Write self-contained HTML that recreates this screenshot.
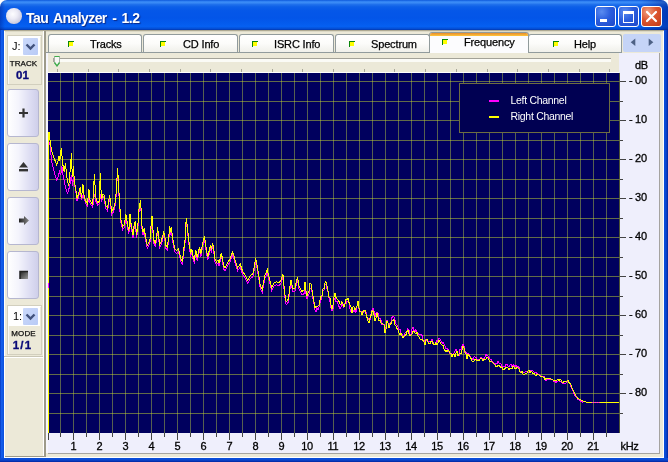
<!DOCTYPE html>
<html><head><meta charset="utf-8"><title>Tau Analyzer - 1.2</title>
<style>
html,body{margin:0;padding:0;}
body{width:668px;height:462px;overflow:hidden;background:#0054e3;font-family:"Liberation Sans",sans-serif;position:relative;}
#win{position:absolute;left:0;top:0;width:668px;height:462px;background:#0a50dc;overflow:hidden;}
#tbar{position:absolute;left:0;top:0;width:668px;height:30px;border-radius:7px 7px 0 0;
 background:linear-gradient(to bottom,#0a55d8 0,#2f80f2 4%,#3b8cf6 9%,#1f70ec 15%,#0c5fe8 23%,#0557e8 36%,#0355e8 60%,#045cee 80%,#0560f2 88%,#0450d8 95%,#0338b0 100%);}
#tshade{position:absolute;left:0;top:0;width:668px;height:30px;border-radius:7px 7px 0 0;
 background:linear-gradient(to right,rgba(0,20,120,.35) 0,rgba(0,0,0,0) 5px,rgba(0,0,0,0) 640px,rgba(0,20,120,.45) 668px);}
#corner-l,#corner-r{position:absolute;top:0;width:8px;height:8px;background:#fff;z-index:0}
#title{position:absolute;left:26px;top:9px;color:#fff;font-weight:bold;font-size:14px;letter-spacing:-0.58px;word-spacing:2.1px;text-shadow:1px 1px 1px #0a2a8a;white-space:nowrap;line-height:18px}
#ball{position:absolute;left:6px;top:8px;width:15.5px;height:15.5px;border-radius:50%;
 background:radial-gradient(circle at 42% 38%,#fdfdff 0%,#ecebf5 35%,#d2d1e2 65%,#b4b3cc 90%,#9c9bb8 100%);}
.cb{position:absolute;top:6px;width:19px;height:19px;border:1px solid #fff;border-radius:3px;}
.cbb{background:radial-gradient(circle at 30% 25%,#5a8cf0 0%,#2b5ede 45%,#1d47c8 100%);}
.cbr{background:radial-gradient(circle at 30% 25%,#f0a080 0%,#dc5530 45%,#c23a18 100%);}
#client{position:absolute;left:4px;top:30px;width:660px;height:428px;background:#ece9d8;}
#lborder{position:absolute;left:0;top:30px;width:4px;height:432px;background:linear-gradient(to right,#0638c0,#1560ee 40%,#0a50dc);}
#rborder{position:absolute;left:664px;top:30px;width:4px;height:432px;background:linear-gradient(to right,#0a50dc,#0c48d0 50%,#0226a0);}
#bborder{position:absolute;left:0;top:458px;width:668px;height:4px;background:linear-gradient(to bottom,#0a50dc,#0c48d0 50%,#0226a0);}
.abs{position:absolute}
.ttext,.ctext,.slabel,.sval,#title{will-change:transform}
svg.main{will-change:transform}
.tab{position:absolute;top:34px;height:18px;box-sizing:border-box;border:1px solid #919b9c;border-bottom:none;border-radius:3px 3px 0 0;background:linear-gradient(to bottom,#ffffff 0%,#fcfcfa 50%,#f0f0ea 100%);}
.ticon{position:absolute;width:5px;height:5px;background:linear-gradient(#ffff00,#ffff00) 0 0/4px 4px no-repeat;border-left:1px solid #0a860a;border-top:1px solid #0a860a;}
.ttext{position:absolute;font-size:11px;letter-spacing:-0.15px;line-height:14px;color:#000;-webkit-text-stroke:0.25px #000;white-space:nowrap}
#seltab{position:absolute;left:429px;top:32px;width:100px;height:22px;box-sizing:border-box;border:1px solid #919b9c;border-bottom:none;border-radius:3px 3px 0 0;background:#fcfcfe;overflow:hidden}
#seltab:before{content:"";position:absolute;left:0;top:0;width:100%;height:3px;background:linear-gradient(to bottom,#e68b2c,#ffc73c);}
#nav{position:absolute;left:623px;top:34px;width:38px;height:18px;background:#c5d4f7;border-radius:2px}
.sbtn{position:absolute;left:7px;width:32px;height:48px;box-sizing:border-box;border:1px solid #b6b7d0;border-radius:3px;background:linear-gradient(to right,#ffffff 0%,#f4f4fc 35%,#dcdcf2 75%,#cfcfea 100%);}
.spanel{position:absolute;left:7px;width:35px;height:50px;box-sizing:border-box;border:1px solid #d2cfbe;box-shadow:inset 1px 1px 0 #fbfaf5;background:#ece9d8;}
.combo{position:absolute;left:0px;top:0px;width:32px;height:20px;background:#fff;}
.ddb{position:absolute;left:15px;top:2px;width:15px;height:17px;background:linear-gradient(135deg,#cbd9fb,#b9cbf6);border-radius:1px}
.ctext{position:absolute;left:3.5px;top:4px;font-size:11px;line-height:13px;color:#000}
.slabel{position:absolute;left:0;width:33px;text-align:center;font-size:7px;line-height:7px;font-weight:normal;-webkit-text-stroke:0.25px #111;color:#111;letter-spacing:0.1px;transform:scaleX(1.14);transform-origin:50% 50%;white-space:nowrap}
.sval{position:absolute;left:0;width:33px;-webkit-text-stroke:0.35px #0a0a78;text-align:center;font-size:11.5px;line-height:12px;font-weight:bold;color:#0a0a78;white-space:nowrap}
svg text{font-family:"Liberation Sans",sans-serif;font-size:11px;fill:#000;stroke:#000;stroke-width:0.3px;letter-spacing:-0.3px}
</style></head><body>
<div id="win">
<div id="corner-l" style="left:0"></div><div id="corner-r" style="left:660px"></div>
<div id="tbar"></div><div id="tshade"></div>
<div id="ball"></div>
<div id="title">Tau Analyzer - 1.2</div>
<div class="cb cbb" style="left:595px"><div class="abs" style="left:4px;top:12px;width:7px;height:3px;background:#fff"></div></div>
<div class="cb cbb" style="left:618px"><div class="abs" style="left:4px;top:4px;width:9px;height:8px;border:1px solid #fff;border-top-width:3px;box-sizing:content-box"></div></div>
<div class="cb cbr" style="left:641px"><svg width="19" height="19" style="position:absolute;left:0;top:0"><path d="M5 5L14 14M14 5L5 14" stroke="#fff" stroke-width="2.2" stroke-linecap="round"/></svg></div>
<div id="lborder"></div><div id="rborder"></div><div id="bborder"></div>
<div id="client"></div>
<div class="abs" style="left:4px;top:30px;width:660px;height:1px;background:#aea993"></div>
<div class="abs" style="left:4px;top:31px;width:660px;height:1px;background:#dcd9c6"></div>

<!-- sidebar -->
<div class="abs" style="left:4px;top:31px;width:1px;height:427px;background:#fff"></div>
<div class="abs" style="left:43px;top:31px;width:1px;height:427px;background:#fff"></div>
<div class="abs" style="left:44px;top:31px;width:2px;height:426px;background:#9d9a8a"></div>
<div class="abs" style="left:5px;top:456px;width:41px;height:1px;background:#9d9a8a"></div>
<div class="abs" style="left:46px;top:53px;width:2px;height:400px;background:#f6f6fd"></div>
<div class="spanel" style="top:35px"><div class="combo"><div class="ctext">J:</div><div class="ddb"><svg width="15" height="17"><path d="M3.5 6.5L7.5 10.5L11.5 6.5" stroke="#41527e" stroke-width="2.4" fill="none"/></svg></div></div>
<div class="slabel" style="top:24px;left:-1px">TRACK</div><div class="sval" style="top:33px;left:-2px">01</div></div>
<div class="sbtn" style="top:89px"><svg width="30" height="46"><path d="M15.5 18.5v9M11 23h9" stroke="#333" stroke-width="2.2"/></svg></div>
<div class="sbtn" style="top:143px"><svg width="30" height="46"><path d="M15.5 18L20 23.5H11Z" fill="#333"/><rect x="11" y="25" width="9" height="2.4" fill="#333"/></svg></div>
<div class="sbtn" style="top:197px"><svg width="30" height="46"><defs><linearGradient id="ag" x1="0" x2="1"><stop offset="0" stop-color="#222"/><stop offset="1" stop-color="#888"/></linearGradient></defs><path d="M11 20.5h5v-2.5l5 4.5l-5 4.5v-2.5h-5z" fill="url(#ag)"/></svg></div>
<div class="sbtn" style="top:251px"><svg width="30" height="46"><defs><linearGradient id="sg" x1="0" y1="0" x2="1" y2="1"><stop offset="0" stop-color="#222"/><stop offset="1" stop-color="#999"/></linearGradient></defs><rect x="12" y="19.5" width="8" height="7.5" fill="url(#sg)"/><path d="M12 27V19.5H20" stroke="#222" stroke-width="1.5" fill="none"/></svg></div>
<div class="spanel" style="top:305px"><div class="combo"><div class="ctext" style="left:5px">1:</div><div class="ddb"><svg width="15" height="17"><path d="M3.5 6.5L7.5 10.5L11.5 6.5" stroke="#41527e" stroke-width="2.4" fill="none"/></svg></div></div>
<div class="slabel" style="top:24px;left:-1px">MODE</div><div class="sval" style="top:33px;left:-2.5px;letter-spacing:1.2px">1/1</div></div>
<div class="abs" style="left:4px;top:356px;width:39px;height:1px;background:#c9c6b5"></div>
<div class="abs" style="left:4px;top:357px;width:39px;height:1px;background:#fff"></div>

<!-- tabs -->
<div class="abs" style="left:46px;top:52px;width:576px;height:1px;background:#919b9c"></div>
<div class="tab" style="left:48px;width:94px"></div>
<div class="ticon" style="left:68px;top:41px"></div>
<div class="ttext" style="left:90px;top:37px">Tracks</div>
<div class="tab" style="left:143px;width:95px"></div>
<div class="ticon" style="left:160px;top:41px"></div>
<div class="ttext" style="left:183px;top:37px">CD Info</div>
<div class="tab" style="left:239px;width:95px"></div>
<div class="ticon" style="left:252px;top:41px"></div>
<div class="ttext" style="left:273.7px;top:37px">ISRC Info</div>
<div class="tab" style="left:335px;width:95px"></div>
<div class="ticon" style="left:349px;top:41px"></div>
<div class="ttext" style="left:370.7px;top:37px">Spectrum</div>
<div class="tab" style="left:528px;width:94px"></div>
<div class="ticon" style="left:553px;top:41px"></div>
<div class="ttext" style="left:574px;top:37px">Help</div>
<div id="seltab"></div>
<div class="ticon" style="left:442px;top:39px"></div>
<div class="ttext" style="left:463.5px;top:35px">Frequency</div>
<div id="nav"><svg width="38" height="18"><path d="M12.3 4.6V12L7.7 8.3Z" fill="#4d6185"/><path d="M25.7 4.6V12L30.3 8.3Z" fill="#4d6185"/></svg></div>

<!-- chart area -->
<div class="abs" style="left:48px;top:53px;width:612px;height:401px;background:#efeffc"></div>
<div class="abs" style="left:659px;top:53px;width:1px;height:401px;background:#a5a3a0"></div>
<div class="abs" style="left:48px;top:453px;width:612px;height:1px;background:#a5a3a0"></div>
<div class="abs" style="left:4px;top:457px;width:660px;height:1px;background:#fff"></div>
<div class="abs" style="left:663px;top:31px;width:1px;height:427px;background:#fff"></div>
<!-- slider -->
<div class="abs" style="left:48px;top:53px;width:571px;height:19px;background:#ece9d8"></div>
<div class="abs" style="left:48px;top:72px;width:571px;height:1px;background:#fff"></div>
<div class="abs" style="left:53px;top:58px;width:558px;height:4px;box-sizing:border-box;border-top:1px solid #a3a298;border-left:1px solid #a3a298;background:#fbfbf6;"></div>
<svg class="abs main" style="left:0;top:0" width="668" height="462">
<rect x="57" y="69" width="1" height="3" fill="#a9a798"/>
<rect x="88" y="69" width="1" height="3" fill="#a9a798"/>
<rect x="118" y="69" width="1" height="3" fill="#a9a798"/>
<rect x="149" y="69" width="1" height="3" fill="#a9a798"/>
<rect x="180" y="69" width="1" height="3" fill="#a9a798"/>
<rect x="210" y="69" width="1" height="3" fill="#a9a798"/>
<rect x="241" y="69" width="1" height="3" fill="#a9a798"/>
<rect x="272" y="69" width="1" height="3" fill="#a9a798"/>
<rect x="302" y="69" width="1" height="3" fill="#a9a798"/>
<rect x="333" y="69" width="1" height="3" fill="#a9a798"/>
<rect x="364" y="69" width="1" height="3" fill="#a9a798"/>
<rect x="394" y="69" width="1" height="3" fill="#a9a798"/>
<rect x="425" y="69" width="1" height="3" fill="#a9a798"/>
<rect x="456" y="69" width="1" height="3" fill="#a9a798"/>
<rect x="487" y="69" width="1" height="3" fill="#a9a798"/>
<rect x="517" y="69" width="1" height="3" fill="#a9a798"/>
<rect x="548" y="69" width="1" height="3" fill="#a9a798"/>
<rect x="579" y="69" width="1" height="3" fill="#a9a798"/>
<rect x="609" y="69" width="1" height="3" fill="#a9a798"/>
<path d="M54.5 56.5h5v6.5l-2.5 3.2l-2.5 -3.2z" fill="#f7f7f4" stroke="#a9b3a9" stroke-width="1"/>
<path d="M54.5 56.5h5" fill="none" stroke="#3fae4a" stroke-width="1"/>
<path d="M54.5 62.5l2.5 3.4l2.5 -3.4" fill="none" stroke="#3fae4a" stroke-width="1.3"/>
<rect x="48" y="73" width="572" height="360" fill="#00005e"/>
<rect x="60" y="73" width="1" height="360" fill="#566050"/>
<rect x="73" y="73" width="1" height="360" fill="#566050"/>
<rect x="86" y="73" width="1" height="360" fill="#566050"/>
<rect x="99" y="73" width="1" height="360" fill="#566050"/>
<rect x="112" y="73" width="1" height="360" fill="#566050"/>
<rect x="125" y="73" width="1" height="360" fill="#566050"/>
<rect x="138" y="73" width="1" height="360" fill="#566050"/>
<rect x="151" y="73" width="1" height="360" fill="#566050"/>
<rect x="164" y="73" width="1" height="360" fill="#566050"/>
<rect x="177" y="73" width="1" height="360" fill="#566050"/>
<rect x="190" y="73" width="1" height="360" fill="#566050"/>
<rect x="203" y="73" width="1" height="360" fill="#566050"/>
<rect x="216" y="73" width="1" height="360" fill="#566050"/>
<rect x="229" y="73" width="1" height="360" fill="#566050"/>
<rect x="242" y="73" width="1" height="360" fill="#566050"/>
<rect x="255" y="73" width="1" height="360" fill="#566050"/>
<rect x="268" y="73" width="1" height="360" fill="#566050"/>
<rect x="281" y="73" width="1" height="360" fill="#566050"/>
<rect x="294" y="73" width="1" height="360" fill="#566050"/>
<rect x="307" y="73" width="1" height="360" fill="#566050"/>
<rect x="320" y="73" width="1" height="360" fill="#566050"/>
<rect x="333" y="73" width="1" height="360" fill="#566050"/>
<rect x="346" y="73" width="1" height="360" fill="#566050"/>
<rect x="359" y="73" width="1" height="360" fill="#566050"/>
<rect x="372" y="73" width="1" height="360" fill="#566050"/>
<rect x="385" y="73" width="1" height="360" fill="#566050"/>
<rect x="398" y="73" width="1" height="360" fill="#566050"/>
<rect x="411" y="73" width="1" height="360" fill="#566050"/>
<rect x="424" y="73" width="1" height="360" fill="#566050"/>
<rect x="437" y="73" width="1" height="360" fill="#566050"/>
<rect x="450" y="73" width="1" height="360" fill="#566050"/>
<rect x="463" y="73" width="1" height="360" fill="#566050"/>
<rect x="476" y="73" width="1" height="360" fill="#566050"/>
<rect x="489" y="73" width="1" height="360" fill="#566050"/>
<rect x="502" y="73" width="1" height="360" fill="#566050"/>
<rect x="515" y="73" width="1" height="360" fill="#566050"/>
<rect x="528" y="73" width="1" height="360" fill="#566050"/>
<rect x="541" y="73" width="1" height="360" fill="#566050"/>
<rect x="554" y="73" width="1" height="360" fill="#566050"/>
<rect x="567" y="73" width="1" height="360" fill="#566050"/>
<rect x="580" y="73" width="1" height="360" fill="#566050"/>
<rect x="593" y="73" width="1" height="360" fill="#566050"/>
<rect x="606" y="73" width="1" height="360" fill="#566050"/>
<rect x="619" y="73" width="1" height="360" fill="#4c5236"/>
<rect x="48" y="81" width="572" height="1" fill="#626c48"/>
<rect x="48" y="101" width="572" height="1" fill="#626c48"/>
<rect x="48" y="120" width="572" height="1" fill="#626c48"/>
<rect x="48" y="140" width="572" height="1" fill="#626c48"/>
<rect x="48" y="159" width="572" height="1" fill="#626c48"/>
<rect x="48" y="179" width="572" height="1" fill="#626c48"/>
<rect x="48" y="198" width="572" height="1" fill="#626c48"/>
<rect x="48" y="218" width="572" height="1" fill="#626c48"/>
<rect x="48" y="237" width="572" height="1" fill="#626c48"/>
<rect x="48" y="257" width="572" height="1" fill="#626c48"/>
<rect x="48" y="276" width="572" height="1" fill="#626c48"/>
<rect x="48" y="296" width="572" height="1" fill="#626c48"/>
<rect x="48" y="315" width="572" height="1" fill="#626c48"/>
<rect x="48" y="335" width="572" height="1" fill="#626c48"/>
<rect x="48" y="354" width="572" height="1" fill="#626c48"/>
<rect x="48" y="374" width="572" height="1" fill="#626c48"/>
<rect x="48" y="393" width="572" height="1" fill="#626c48"/>
<rect x="48" y="413" width="572" height="1" fill="#626c48"/>
<rect x="60" y="81" width="1" height="1" fill="#90a034"/>
<rect x="60" y="101" width="1" height="1" fill="#90a034"/>
<rect x="60" y="120" width="1" height="1" fill="#90a034"/>
<rect x="60" y="140" width="1" height="1" fill="#90a034"/>
<rect x="60" y="159" width="1" height="1" fill="#90a034"/>
<rect x="60" y="179" width="1" height="1" fill="#90a034"/>
<rect x="60" y="198" width="1" height="1" fill="#90a034"/>
<rect x="60" y="218" width="1" height="1" fill="#90a034"/>
<rect x="60" y="237" width="1" height="1" fill="#90a034"/>
<rect x="60" y="257" width="1" height="1" fill="#90a034"/>
<rect x="60" y="276" width="1" height="1" fill="#90a034"/>
<rect x="60" y="296" width="1" height="1" fill="#90a034"/>
<rect x="60" y="315" width="1" height="1" fill="#90a034"/>
<rect x="60" y="335" width="1" height="1" fill="#90a034"/>
<rect x="60" y="354" width="1" height="1" fill="#90a034"/>
<rect x="60" y="374" width="1" height="1" fill="#90a034"/>
<rect x="60" y="393" width="1" height="1" fill="#90a034"/>
<rect x="60" y="413" width="1" height="1" fill="#90a034"/>
<rect x="73" y="81" width="1" height="1" fill="#90a034"/>
<rect x="73" y="101" width="1" height="1" fill="#90a034"/>
<rect x="73" y="120" width="1" height="1" fill="#90a034"/>
<rect x="73" y="140" width="1" height="1" fill="#90a034"/>
<rect x="73" y="159" width="1" height="1" fill="#90a034"/>
<rect x="73" y="179" width="1" height="1" fill="#90a034"/>
<rect x="73" y="198" width="1" height="1" fill="#90a034"/>
<rect x="73" y="218" width="1" height="1" fill="#90a034"/>
<rect x="73" y="237" width="1" height="1" fill="#90a034"/>
<rect x="73" y="257" width="1" height="1" fill="#90a034"/>
<rect x="73" y="276" width="1" height="1" fill="#90a034"/>
<rect x="73" y="296" width="1" height="1" fill="#90a034"/>
<rect x="73" y="315" width="1" height="1" fill="#90a034"/>
<rect x="73" y="335" width="1" height="1" fill="#90a034"/>
<rect x="73" y="354" width="1" height="1" fill="#90a034"/>
<rect x="73" y="374" width="1" height="1" fill="#90a034"/>
<rect x="73" y="393" width="1" height="1" fill="#90a034"/>
<rect x="73" y="413" width="1" height="1" fill="#90a034"/>
<rect x="86" y="81" width="1" height="1" fill="#90a034"/>
<rect x="86" y="101" width="1" height="1" fill="#90a034"/>
<rect x="86" y="120" width="1" height="1" fill="#90a034"/>
<rect x="86" y="140" width="1" height="1" fill="#90a034"/>
<rect x="86" y="159" width="1" height="1" fill="#90a034"/>
<rect x="86" y="179" width="1" height="1" fill="#90a034"/>
<rect x="86" y="198" width="1" height="1" fill="#90a034"/>
<rect x="86" y="218" width="1" height="1" fill="#90a034"/>
<rect x="86" y="237" width="1" height="1" fill="#90a034"/>
<rect x="86" y="257" width="1" height="1" fill="#90a034"/>
<rect x="86" y="276" width="1" height="1" fill="#90a034"/>
<rect x="86" y="296" width="1" height="1" fill="#90a034"/>
<rect x="86" y="315" width="1" height="1" fill="#90a034"/>
<rect x="86" y="335" width="1" height="1" fill="#90a034"/>
<rect x="86" y="354" width="1" height="1" fill="#90a034"/>
<rect x="86" y="374" width="1" height="1" fill="#90a034"/>
<rect x="86" y="393" width="1" height="1" fill="#90a034"/>
<rect x="86" y="413" width="1" height="1" fill="#90a034"/>
<rect x="99" y="81" width="1" height="1" fill="#90a034"/>
<rect x="99" y="101" width="1" height="1" fill="#90a034"/>
<rect x="99" y="120" width="1" height="1" fill="#90a034"/>
<rect x="99" y="140" width="1" height="1" fill="#90a034"/>
<rect x="99" y="159" width="1" height="1" fill="#90a034"/>
<rect x="99" y="179" width="1" height="1" fill="#90a034"/>
<rect x="99" y="198" width="1" height="1" fill="#90a034"/>
<rect x="99" y="218" width="1" height="1" fill="#90a034"/>
<rect x="99" y="237" width="1" height="1" fill="#90a034"/>
<rect x="99" y="257" width="1" height="1" fill="#90a034"/>
<rect x="99" y="276" width="1" height="1" fill="#90a034"/>
<rect x="99" y="296" width="1" height="1" fill="#90a034"/>
<rect x="99" y="315" width="1" height="1" fill="#90a034"/>
<rect x="99" y="335" width="1" height="1" fill="#90a034"/>
<rect x="99" y="354" width="1" height="1" fill="#90a034"/>
<rect x="99" y="374" width="1" height="1" fill="#90a034"/>
<rect x="99" y="393" width="1" height="1" fill="#90a034"/>
<rect x="99" y="413" width="1" height="1" fill="#90a034"/>
<rect x="112" y="81" width="1" height="1" fill="#90a034"/>
<rect x="112" y="101" width="1" height="1" fill="#90a034"/>
<rect x="112" y="120" width="1" height="1" fill="#90a034"/>
<rect x="112" y="140" width="1" height="1" fill="#90a034"/>
<rect x="112" y="159" width="1" height="1" fill="#90a034"/>
<rect x="112" y="179" width="1" height="1" fill="#90a034"/>
<rect x="112" y="198" width="1" height="1" fill="#90a034"/>
<rect x="112" y="218" width="1" height="1" fill="#90a034"/>
<rect x="112" y="237" width="1" height="1" fill="#90a034"/>
<rect x="112" y="257" width="1" height="1" fill="#90a034"/>
<rect x="112" y="276" width="1" height="1" fill="#90a034"/>
<rect x="112" y="296" width="1" height="1" fill="#90a034"/>
<rect x="112" y="315" width="1" height="1" fill="#90a034"/>
<rect x="112" y="335" width="1" height="1" fill="#90a034"/>
<rect x="112" y="354" width="1" height="1" fill="#90a034"/>
<rect x="112" y="374" width="1" height="1" fill="#90a034"/>
<rect x="112" y="393" width="1" height="1" fill="#90a034"/>
<rect x="112" y="413" width="1" height="1" fill="#90a034"/>
<rect x="125" y="81" width="1" height="1" fill="#90a034"/>
<rect x="125" y="101" width="1" height="1" fill="#90a034"/>
<rect x="125" y="120" width="1" height="1" fill="#90a034"/>
<rect x="125" y="140" width="1" height="1" fill="#90a034"/>
<rect x="125" y="159" width="1" height="1" fill="#90a034"/>
<rect x="125" y="179" width="1" height="1" fill="#90a034"/>
<rect x="125" y="198" width="1" height="1" fill="#90a034"/>
<rect x="125" y="218" width="1" height="1" fill="#90a034"/>
<rect x="125" y="237" width="1" height="1" fill="#90a034"/>
<rect x="125" y="257" width="1" height="1" fill="#90a034"/>
<rect x="125" y="276" width="1" height="1" fill="#90a034"/>
<rect x="125" y="296" width="1" height="1" fill="#90a034"/>
<rect x="125" y="315" width="1" height="1" fill="#90a034"/>
<rect x="125" y="335" width="1" height="1" fill="#90a034"/>
<rect x="125" y="354" width="1" height="1" fill="#90a034"/>
<rect x="125" y="374" width="1" height="1" fill="#90a034"/>
<rect x="125" y="393" width="1" height="1" fill="#90a034"/>
<rect x="125" y="413" width="1" height="1" fill="#90a034"/>
<rect x="138" y="81" width="1" height="1" fill="#90a034"/>
<rect x="138" y="101" width="1" height="1" fill="#90a034"/>
<rect x="138" y="120" width="1" height="1" fill="#90a034"/>
<rect x="138" y="140" width="1" height="1" fill="#90a034"/>
<rect x="138" y="159" width="1" height="1" fill="#90a034"/>
<rect x="138" y="179" width="1" height="1" fill="#90a034"/>
<rect x="138" y="198" width="1" height="1" fill="#90a034"/>
<rect x="138" y="218" width="1" height="1" fill="#90a034"/>
<rect x="138" y="237" width="1" height="1" fill="#90a034"/>
<rect x="138" y="257" width="1" height="1" fill="#90a034"/>
<rect x="138" y="276" width="1" height="1" fill="#90a034"/>
<rect x="138" y="296" width="1" height="1" fill="#90a034"/>
<rect x="138" y="315" width="1" height="1" fill="#90a034"/>
<rect x="138" y="335" width="1" height="1" fill="#90a034"/>
<rect x="138" y="354" width="1" height="1" fill="#90a034"/>
<rect x="138" y="374" width="1" height="1" fill="#90a034"/>
<rect x="138" y="393" width="1" height="1" fill="#90a034"/>
<rect x="138" y="413" width="1" height="1" fill="#90a034"/>
<rect x="151" y="81" width="1" height="1" fill="#90a034"/>
<rect x="151" y="101" width="1" height="1" fill="#90a034"/>
<rect x="151" y="120" width="1" height="1" fill="#90a034"/>
<rect x="151" y="140" width="1" height="1" fill="#90a034"/>
<rect x="151" y="159" width="1" height="1" fill="#90a034"/>
<rect x="151" y="179" width="1" height="1" fill="#90a034"/>
<rect x="151" y="198" width="1" height="1" fill="#90a034"/>
<rect x="151" y="218" width="1" height="1" fill="#90a034"/>
<rect x="151" y="237" width="1" height="1" fill="#90a034"/>
<rect x="151" y="257" width="1" height="1" fill="#90a034"/>
<rect x="151" y="276" width="1" height="1" fill="#90a034"/>
<rect x="151" y="296" width="1" height="1" fill="#90a034"/>
<rect x="151" y="315" width="1" height="1" fill="#90a034"/>
<rect x="151" y="335" width="1" height="1" fill="#90a034"/>
<rect x="151" y="354" width="1" height="1" fill="#90a034"/>
<rect x="151" y="374" width="1" height="1" fill="#90a034"/>
<rect x="151" y="393" width="1" height="1" fill="#90a034"/>
<rect x="151" y="413" width="1" height="1" fill="#90a034"/>
<rect x="164" y="81" width="1" height="1" fill="#90a034"/>
<rect x="164" y="101" width="1" height="1" fill="#90a034"/>
<rect x="164" y="120" width="1" height="1" fill="#90a034"/>
<rect x="164" y="140" width="1" height="1" fill="#90a034"/>
<rect x="164" y="159" width="1" height="1" fill="#90a034"/>
<rect x="164" y="179" width="1" height="1" fill="#90a034"/>
<rect x="164" y="198" width="1" height="1" fill="#90a034"/>
<rect x="164" y="218" width="1" height="1" fill="#90a034"/>
<rect x="164" y="237" width="1" height="1" fill="#90a034"/>
<rect x="164" y="257" width="1" height="1" fill="#90a034"/>
<rect x="164" y="276" width="1" height="1" fill="#90a034"/>
<rect x="164" y="296" width="1" height="1" fill="#90a034"/>
<rect x="164" y="315" width="1" height="1" fill="#90a034"/>
<rect x="164" y="335" width="1" height="1" fill="#90a034"/>
<rect x="164" y="354" width="1" height="1" fill="#90a034"/>
<rect x="164" y="374" width="1" height="1" fill="#90a034"/>
<rect x="164" y="393" width="1" height="1" fill="#90a034"/>
<rect x="164" y="413" width="1" height="1" fill="#90a034"/>
<rect x="177" y="81" width="1" height="1" fill="#90a034"/>
<rect x="177" y="101" width="1" height="1" fill="#90a034"/>
<rect x="177" y="120" width="1" height="1" fill="#90a034"/>
<rect x="177" y="140" width="1" height="1" fill="#90a034"/>
<rect x="177" y="159" width="1" height="1" fill="#90a034"/>
<rect x="177" y="179" width="1" height="1" fill="#90a034"/>
<rect x="177" y="198" width="1" height="1" fill="#90a034"/>
<rect x="177" y="218" width="1" height="1" fill="#90a034"/>
<rect x="177" y="237" width="1" height="1" fill="#90a034"/>
<rect x="177" y="257" width="1" height="1" fill="#90a034"/>
<rect x="177" y="276" width="1" height="1" fill="#90a034"/>
<rect x="177" y="296" width="1" height="1" fill="#90a034"/>
<rect x="177" y="315" width="1" height="1" fill="#90a034"/>
<rect x="177" y="335" width="1" height="1" fill="#90a034"/>
<rect x="177" y="354" width="1" height="1" fill="#90a034"/>
<rect x="177" y="374" width="1" height="1" fill="#90a034"/>
<rect x="177" y="393" width="1" height="1" fill="#90a034"/>
<rect x="177" y="413" width="1" height="1" fill="#90a034"/>
<rect x="190" y="81" width="1" height="1" fill="#90a034"/>
<rect x="190" y="101" width="1" height="1" fill="#90a034"/>
<rect x="190" y="120" width="1" height="1" fill="#90a034"/>
<rect x="190" y="140" width="1" height="1" fill="#90a034"/>
<rect x="190" y="159" width="1" height="1" fill="#90a034"/>
<rect x="190" y="179" width="1" height="1" fill="#90a034"/>
<rect x="190" y="198" width="1" height="1" fill="#90a034"/>
<rect x="190" y="218" width="1" height="1" fill="#90a034"/>
<rect x="190" y="237" width="1" height="1" fill="#90a034"/>
<rect x="190" y="257" width="1" height="1" fill="#90a034"/>
<rect x="190" y="276" width="1" height="1" fill="#90a034"/>
<rect x="190" y="296" width="1" height="1" fill="#90a034"/>
<rect x="190" y="315" width="1" height="1" fill="#90a034"/>
<rect x="190" y="335" width="1" height="1" fill="#90a034"/>
<rect x="190" y="354" width="1" height="1" fill="#90a034"/>
<rect x="190" y="374" width="1" height="1" fill="#90a034"/>
<rect x="190" y="393" width="1" height="1" fill="#90a034"/>
<rect x="190" y="413" width="1" height="1" fill="#90a034"/>
<rect x="203" y="81" width="1" height="1" fill="#90a034"/>
<rect x="203" y="101" width="1" height="1" fill="#90a034"/>
<rect x="203" y="120" width="1" height="1" fill="#90a034"/>
<rect x="203" y="140" width="1" height="1" fill="#90a034"/>
<rect x="203" y="159" width="1" height="1" fill="#90a034"/>
<rect x="203" y="179" width="1" height="1" fill="#90a034"/>
<rect x="203" y="198" width="1" height="1" fill="#90a034"/>
<rect x="203" y="218" width="1" height="1" fill="#90a034"/>
<rect x="203" y="237" width="1" height="1" fill="#90a034"/>
<rect x="203" y="257" width="1" height="1" fill="#90a034"/>
<rect x="203" y="276" width="1" height="1" fill="#90a034"/>
<rect x="203" y="296" width="1" height="1" fill="#90a034"/>
<rect x="203" y="315" width="1" height="1" fill="#90a034"/>
<rect x="203" y="335" width="1" height="1" fill="#90a034"/>
<rect x="203" y="354" width="1" height="1" fill="#90a034"/>
<rect x="203" y="374" width="1" height="1" fill="#90a034"/>
<rect x="203" y="393" width="1" height="1" fill="#90a034"/>
<rect x="203" y="413" width="1" height="1" fill="#90a034"/>
<rect x="216" y="81" width="1" height="1" fill="#90a034"/>
<rect x="216" y="101" width="1" height="1" fill="#90a034"/>
<rect x="216" y="120" width="1" height="1" fill="#90a034"/>
<rect x="216" y="140" width="1" height="1" fill="#90a034"/>
<rect x="216" y="159" width="1" height="1" fill="#90a034"/>
<rect x="216" y="179" width="1" height="1" fill="#90a034"/>
<rect x="216" y="198" width="1" height="1" fill="#90a034"/>
<rect x="216" y="218" width="1" height="1" fill="#90a034"/>
<rect x="216" y="237" width="1" height="1" fill="#90a034"/>
<rect x="216" y="257" width="1" height="1" fill="#90a034"/>
<rect x="216" y="276" width="1" height="1" fill="#90a034"/>
<rect x="216" y="296" width="1" height="1" fill="#90a034"/>
<rect x="216" y="315" width="1" height="1" fill="#90a034"/>
<rect x="216" y="335" width="1" height="1" fill="#90a034"/>
<rect x="216" y="354" width="1" height="1" fill="#90a034"/>
<rect x="216" y="374" width="1" height="1" fill="#90a034"/>
<rect x="216" y="393" width="1" height="1" fill="#90a034"/>
<rect x="216" y="413" width="1" height="1" fill="#90a034"/>
<rect x="229" y="81" width="1" height="1" fill="#90a034"/>
<rect x="229" y="101" width="1" height="1" fill="#90a034"/>
<rect x="229" y="120" width="1" height="1" fill="#90a034"/>
<rect x="229" y="140" width="1" height="1" fill="#90a034"/>
<rect x="229" y="159" width="1" height="1" fill="#90a034"/>
<rect x="229" y="179" width="1" height="1" fill="#90a034"/>
<rect x="229" y="198" width="1" height="1" fill="#90a034"/>
<rect x="229" y="218" width="1" height="1" fill="#90a034"/>
<rect x="229" y="237" width="1" height="1" fill="#90a034"/>
<rect x="229" y="257" width="1" height="1" fill="#90a034"/>
<rect x="229" y="276" width="1" height="1" fill="#90a034"/>
<rect x="229" y="296" width="1" height="1" fill="#90a034"/>
<rect x="229" y="315" width="1" height="1" fill="#90a034"/>
<rect x="229" y="335" width="1" height="1" fill="#90a034"/>
<rect x="229" y="354" width="1" height="1" fill="#90a034"/>
<rect x="229" y="374" width="1" height="1" fill="#90a034"/>
<rect x="229" y="393" width="1" height="1" fill="#90a034"/>
<rect x="229" y="413" width="1" height="1" fill="#90a034"/>
<rect x="242" y="81" width="1" height="1" fill="#90a034"/>
<rect x="242" y="101" width="1" height="1" fill="#90a034"/>
<rect x="242" y="120" width="1" height="1" fill="#90a034"/>
<rect x="242" y="140" width="1" height="1" fill="#90a034"/>
<rect x="242" y="159" width="1" height="1" fill="#90a034"/>
<rect x="242" y="179" width="1" height="1" fill="#90a034"/>
<rect x="242" y="198" width="1" height="1" fill="#90a034"/>
<rect x="242" y="218" width="1" height="1" fill="#90a034"/>
<rect x="242" y="237" width="1" height="1" fill="#90a034"/>
<rect x="242" y="257" width="1" height="1" fill="#90a034"/>
<rect x="242" y="276" width="1" height="1" fill="#90a034"/>
<rect x="242" y="296" width="1" height="1" fill="#90a034"/>
<rect x="242" y="315" width="1" height="1" fill="#90a034"/>
<rect x="242" y="335" width="1" height="1" fill="#90a034"/>
<rect x="242" y="354" width="1" height="1" fill="#90a034"/>
<rect x="242" y="374" width="1" height="1" fill="#90a034"/>
<rect x="242" y="393" width="1" height="1" fill="#90a034"/>
<rect x="242" y="413" width="1" height="1" fill="#90a034"/>
<rect x="255" y="81" width="1" height="1" fill="#90a034"/>
<rect x="255" y="101" width="1" height="1" fill="#90a034"/>
<rect x="255" y="120" width="1" height="1" fill="#90a034"/>
<rect x="255" y="140" width="1" height="1" fill="#90a034"/>
<rect x="255" y="159" width="1" height="1" fill="#90a034"/>
<rect x="255" y="179" width="1" height="1" fill="#90a034"/>
<rect x="255" y="198" width="1" height="1" fill="#90a034"/>
<rect x="255" y="218" width="1" height="1" fill="#90a034"/>
<rect x="255" y="237" width="1" height="1" fill="#90a034"/>
<rect x="255" y="257" width="1" height="1" fill="#90a034"/>
<rect x="255" y="276" width="1" height="1" fill="#90a034"/>
<rect x="255" y="296" width="1" height="1" fill="#90a034"/>
<rect x="255" y="315" width="1" height="1" fill="#90a034"/>
<rect x="255" y="335" width="1" height="1" fill="#90a034"/>
<rect x="255" y="354" width="1" height="1" fill="#90a034"/>
<rect x="255" y="374" width="1" height="1" fill="#90a034"/>
<rect x="255" y="393" width="1" height="1" fill="#90a034"/>
<rect x="255" y="413" width="1" height="1" fill="#90a034"/>
<rect x="268" y="81" width="1" height="1" fill="#90a034"/>
<rect x="268" y="101" width="1" height="1" fill="#90a034"/>
<rect x="268" y="120" width="1" height="1" fill="#90a034"/>
<rect x="268" y="140" width="1" height="1" fill="#90a034"/>
<rect x="268" y="159" width="1" height="1" fill="#90a034"/>
<rect x="268" y="179" width="1" height="1" fill="#90a034"/>
<rect x="268" y="198" width="1" height="1" fill="#90a034"/>
<rect x="268" y="218" width="1" height="1" fill="#90a034"/>
<rect x="268" y="237" width="1" height="1" fill="#90a034"/>
<rect x="268" y="257" width="1" height="1" fill="#90a034"/>
<rect x="268" y="276" width="1" height="1" fill="#90a034"/>
<rect x="268" y="296" width="1" height="1" fill="#90a034"/>
<rect x="268" y="315" width="1" height="1" fill="#90a034"/>
<rect x="268" y="335" width="1" height="1" fill="#90a034"/>
<rect x="268" y="354" width="1" height="1" fill="#90a034"/>
<rect x="268" y="374" width="1" height="1" fill="#90a034"/>
<rect x="268" y="393" width="1" height="1" fill="#90a034"/>
<rect x="268" y="413" width="1" height="1" fill="#90a034"/>
<rect x="281" y="81" width="1" height="1" fill="#90a034"/>
<rect x="281" y="101" width="1" height="1" fill="#90a034"/>
<rect x="281" y="120" width="1" height="1" fill="#90a034"/>
<rect x="281" y="140" width="1" height="1" fill="#90a034"/>
<rect x="281" y="159" width="1" height="1" fill="#90a034"/>
<rect x="281" y="179" width="1" height="1" fill="#90a034"/>
<rect x="281" y="198" width="1" height="1" fill="#90a034"/>
<rect x="281" y="218" width="1" height="1" fill="#90a034"/>
<rect x="281" y="237" width="1" height="1" fill="#90a034"/>
<rect x="281" y="257" width="1" height="1" fill="#90a034"/>
<rect x="281" y="276" width="1" height="1" fill="#90a034"/>
<rect x="281" y="296" width="1" height="1" fill="#90a034"/>
<rect x="281" y="315" width="1" height="1" fill="#90a034"/>
<rect x="281" y="335" width="1" height="1" fill="#90a034"/>
<rect x="281" y="354" width="1" height="1" fill="#90a034"/>
<rect x="281" y="374" width="1" height="1" fill="#90a034"/>
<rect x="281" y="393" width="1" height="1" fill="#90a034"/>
<rect x="281" y="413" width="1" height="1" fill="#90a034"/>
<rect x="294" y="81" width="1" height="1" fill="#90a034"/>
<rect x="294" y="101" width="1" height="1" fill="#90a034"/>
<rect x="294" y="120" width="1" height="1" fill="#90a034"/>
<rect x="294" y="140" width="1" height="1" fill="#90a034"/>
<rect x="294" y="159" width="1" height="1" fill="#90a034"/>
<rect x="294" y="179" width="1" height="1" fill="#90a034"/>
<rect x="294" y="198" width="1" height="1" fill="#90a034"/>
<rect x="294" y="218" width="1" height="1" fill="#90a034"/>
<rect x="294" y="237" width="1" height="1" fill="#90a034"/>
<rect x="294" y="257" width="1" height="1" fill="#90a034"/>
<rect x="294" y="276" width="1" height="1" fill="#90a034"/>
<rect x="294" y="296" width="1" height="1" fill="#90a034"/>
<rect x="294" y="315" width="1" height="1" fill="#90a034"/>
<rect x="294" y="335" width="1" height="1" fill="#90a034"/>
<rect x="294" y="354" width="1" height="1" fill="#90a034"/>
<rect x="294" y="374" width="1" height="1" fill="#90a034"/>
<rect x="294" y="393" width="1" height="1" fill="#90a034"/>
<rect x="294" y="413" width="1" height="1" fill="#90a034"/>
<rect x="307" y="81" width="1" height="1" fill="#90a034"/>
<rect x="307" y="101" width="1" height="1" fill="#90a034"/>
<rect x="307" y="120" width="1" height="1" fill="#90a034"/>
<rect x="307" y="140" width="1" height="1" fill="#90a034"/>
<rect x="307" y="159" width="1" height="1" fill="#90a034"/>
<rect x="307" y="179" width="1" height="1" fill="#90a034"/>
<rect x="307" y="198" width="1" height="1" fill="#90a034"/>
<rect x="307" y="218" width="1" height="1" fill="#90a034"/>
<rect x="307" y="237" width="1" height="1" fill="#90a034"/>
<rect x="307" y="257" width="1" height="1" fill="#90a034"/>
<rect x="307" y="276" width="1" height="1" fill="#90a034"/>
<rect x="307" y="296" width="1" height="1" fill="#90a034"/>
<rect x="307" y="315" width="1" height="1" fill="#90a034"/>
<rect x="307" y="335" width="1" height="1" fill="#90a034"/>
<rect x="307" y="354" width="1" height="1" fill="#90a034"/>
<rect x="307" y="374" width="1" height="1" fill="#90a034"/>
<rect x="307" y="393" width="1" height="1" fill="#90a034"/>
<rect x="307" y="413" width="1" height="1" fill="#90a034"/>
<rect x="320" y="81" width="1" height="1" fill="#90a034"/>
<rect x="320" y="101" width="1" height="1" fill="#90a034"/>
<rect x="320" y="120" width="1" height="1" fill="#90a034"/>
<rect x="320" y="140" width="1" height="1" fill="#90a034"/>
<rect x="320" y="159" width="1" height="1" fill="#90a034"/>
<rect x="320" y="179" width="1" height="1" fill="#90a034"/>
<rect x="320" y="198" width="1" height="1" fill="#90a034"/>
<rect x="320" y="218" width="1" height="1" fill="#90a034"/>
<rect x="320" y="237" width="1" height="1" fill="#90a034"/>
<rect x="320" y="257" width="1" height="1" fill="#90a034"/>
<rect x="320" y="276" width="1" height="1" fill="#90a034"/>
<rect x="320" y="296" width="1" height="1" fill="#90a034"/>
<rect x="320" y="315" width="1" height="1" fill="#90a034"/>
<rect x="320" y="335" width="1" height="1" fill="#90a034"/>
<rect x="320" y="354" width="1" height="1" fill="#90a034"/>
<rect x="320" y="374" width="1" height="1" fill="#90a034"/>
<rect x="320" y="393" width="1" height="1" fill="#90a034"/>
<rect x="320" y="413" width="1" height="1" fill="#90a034"/>
<rect x="333" y="81" width="1" height="1" fill="#90a034"/>
<rect x="333" y="101" width="1" height="1" fill="#90a034"/>
<rect x="333" y="120" width="1" height="1" fill="#90a034"/>
<rect x="333" y="140" width="1" height="1" fill="#90a034"/>
<rect x="333" y="159" width="1" height="1" fill="#90a034"/>
<rect x="333" y="179" width="1" height="1" fill="#90a034"/>
<rect x="333" y="198" width="1" height="1" fill="#90a034"/>
<rect x="333" y="218" width="1" height="1" fill="#90a034"/>
<rect x="333" y="237" width="1" height="1" fill="#90a034"/>
<rect x="333" y="257" width="1" height="1" fill="#90a034"/>
<rect x="333" y="276" width="1" height="1" fill="#90a034"/>
<rect x="333" y="296" width="1" height="1" fill="#90a034"/>
<rect x="333" y="315" width="1" height="1" fill="#90a034"/>
<rect x="333" y="335" width="1" height="1" fill="#90a034"/>
<rect x="333" y="354" width="1" height="1" fill="#90a034"/>
<rect x="333" y="374" width="1" height="1" fill="#90a034"/>
<rect x="333" y="393" width="1" height="1" fill="#90a034"/>
<rect x="333" y="413" width="1" height="1" fill="#90a034"/>
<rect x="346" y="81" width="1" height="1" fill="#90a034"/>
<rect x="346" y="101" width="1" height="1" fill="#90a034"/>
<rect x="346" y="120" width="1" height="1" fill="#90a034"/>
<rect x="346" y="140" width="1" height="1" fill="#90a034"/>
<rect x="346" y="159" width="1" height="1" fill="#90a034"/>
<rect x="346" y="179" width="1" height="1" fill="#90a034"/>
<rect x="346" y="198" width="1" height="1" fill="#90a034"/>
<rect x="346" y="218" width="1" height="1" fill="#90a034"/>
<rect x="346" y="237" width="1" height="1" fill="#90a034"/>
<rect x="346" y="257" width="1" height="1" fill="#90a034"/>
<rect x="346" y="276" width="1" height="1" fill="#90a034"/>
<rect x="346" y="296" width="1" height="1" fill="#90a034"/>
<rect x="346" y="315" width="1" height="1" fill="#90a034"/>
<rect x="346" y="335" width="1" height="1" fill="#90a034"/>
<rect x="346" y="354" width="1" height="1" fill="#90a034"/>
<rect x="346" y="374" width="1" height="1" fill="#90a034"/>
<rect x="346" y="393" width="1" height="1" fill="#90a034"/>
<rect x="346" y="413" width="1" height="1" fill="#90a034"/>
<rect x="359" y="81" width="1" height="1" fill="#90a034"/>
<rect x="359" y="101" width="1" height="1" fill="#90a034"/>
<rect x="359" y="120" width="1" height="1" fill="#90a034"/>
<rect x="359" y="140" width="1" height="1" fill="#90a034"/>
<rect x="359" y="159" width="1" height="1" fill="#90a034"/>
<rect x="359" y="179" width="1" height="1" fill="#90a034"/>
<rect x="359" y="198" width="1" height="1" fill="#90a034"/>
<rect x="359" y="218" width="1" height="1" fill="#90a034"/>
<rect x="359" y="237" width="1" height="1" fill="#90a034"/>
<rect x="359" y="257" width="1" height="1" fill="#90a034"/>
<rect x="359" y="276" width="1" height="1" fill="#90a034"/>
<rect x="359" y="296" width="1" height="1" fill="#90a034"/>
<rect x="359" y="315" width="1" height="1" fill="#90a034"/>
<rect x="359" y="335" width="1" height="1" fill="#90a034"/>
<rect x="359" y="354" width="1" height="1" fill="#90a034"/>
<rect x="359" y="374" width="1" height="1" fill="#90a034"/>
<rect x="359" y="393" width="1" height="1" fill="#90a034"/>
<rect x="359" y="413" width="1" height="1" fill="#90a034"/>
<rect x="372" y="81" width="1" height="1" fill="#90a034"/>
<rect x="372" y="101" width="1" height="1" fill="#90a034"/>
<rect x="372" y="120" width="1" height="1" fill="#90a034"/>
<rect x="372" y="140" width="1" height="1" fill="#90a034"/>
<rect x="372" y="159" width="1" height="1" fill="#90a034"/>
<rect x="372" y="179" width="1" height="1" fill="#90a034"/>
<rect x="372" y="198" width="1" height="1" fill="#90a034"/>
<rect x="372" y="218" width="1" height="1" fill="#90a034"/>
<rect x="372" y="237" width="1" height="1" fill="#90a034"/>
<rect x="372" y="257" width="1" height="1" fill="#90a034"/>
<rect x="372" y="276" width="1" height="1" fill="#90a034"/>
<rect x="372" y="296" width="1" height="1" fill="#90a034"/>
<rect x="372" y="315" width="1" height="1" fill="#90a034"/>
<rect x="372" y="335" width="1" height="1" fill="#90a034"/>
<rect x="372" y="354" width="1" height="1" fill="#90a034"/>
<rect x="372" y="374" width="1" height="1" fill="#90a034"/>
<rect x="372" y="393" width="1" height="1" fill="#90a034"/>
<rect x="372" y="413" width="1" height="1" fill="#90a034"/>
<rect x="385" y="81" width="1" height="1" fill="#90a034"/>
<rect x="385" y="101" width="1" height="1" fill="#90a034"/>
<rect x="385" y="120" width="1" height="1" fill="#90a034"/>
<rect x="385" y="140" width="1" height="1" fill="#90a034"/>
<rect x="385" y="159" width="1" height="1" fill="#90a034"/>
<rect x="385" y="179" width="1" height="1" fill="#90a034"/>
<rect x="385" y="198" width="1" height="1" fill="#90a034"/>
<rect x="385" y="218" width="1" height="1" fill="#90a034"/>
<rect x="385" y="237" width="1" height="1" fill="#90a034"/>
<rect x="385" y="257" width="1" height="1" fill="#90a034"/>
<rect x="385" y="276" width="1" height="1" fill="#90a034"/>
<rect x="385" y="296" width="1" height="1" fill="#90a034"/>
<rect x="385" y="315" width="1" height="1" fill="#90a034"/>
<rect x="385" y="335" width="1" height="1" fill="#90a034"/>
<rect x="385" y="354" width="1" height="1" fill="#90a034"/>
<rect x="385" y="374" width="1" height="1" fill="#90a034"/>
<rect x="385" y="393" width="1" height="1" fill="#90a034"/>
<rect x="385" y="413" width="1" height="1" fill="#90a034"/>
<rect x="398" y="81" width="1" height="1" fill="#90a034"/>
<rect x="398" y="101" width="1" height="1" fill="#90a034"/>
<rect x="398" y="120" width="1" height="1" fill="#90a034"/>
<rect x="398" y="140" width="1" height="1" fill="#90a034"/>
<rect x="398" y="159" width="1" height="1" fill="#90a034"/>
<rect x="398" y="179" width="1" height="1" fill="#90a034"/>
<rect x="398" y="198" width="1" height="1" fill="#90a034"/>
<rect x="398" y="218" width="1" height="1" fill="#90a034"/>
<rect x="398" y="237" width="1" height="1" fill="#90a034"/>
<rect x="398" y="257" width="1" height="1" fill="#90a034"/>
<rect x="398" y="276" width="1" height="1" fill="#90a034"/>
<rect x="398" y="296" width="1" height="1" fill="#90a034"/>
<rect x="398" y="315" width="1" height="1" fill="#90a034"/>
<rect x="398" y="335" width="1" height="1" fill="#90a034"/>
<rect x="398" y="354" width="1" height="1" fill="#90a034"/>
<rect x="398" y="374" width="1" height="1" fill="#90a034"/>
<rect x="398" y="393" width="1" height="1" fill="#90a034"/>
<rect x="398" y="413" width="1" height="1" fill="#90a034"/>
<rect x="411" y="81" width="1" height="1" fill="#90a034"/>
<rect x="411" y="101" width="1" height="1" fill="#90a034"/>
<rect x="411" y="120" width="1" height="1" fill="#90a034"/>
<rect x="411" y="140" width="1" height="1" fill="#90a034"/>
<rect x="411" y="159" width="1" height="1" fill="#90a034"/>
<rect x="411" y="179" width="1" height="1" fill="#90a034"/>
<rect x="411" y="198" width="1" height="1" fill="#90a034"/>
<rect x="411" y="218" width="1" height="1" fill="#90a034"/>
<rect x="411" y="237" width="1" height="1" fill="#90a034"/>
<rect x="411" y="257" width="1" height="1" fill="#90a034"/>
<rect x="411" y="276" width="1" height="1" fill="#90a034"/>
<rect x="411" y="296" width="1" height="1" fill="#90a034"/>
<rect x="411" y="315" width="1" height="1" fill="#90a034"/>
<rect x="411" y="335" width="1" height="1" fill="#90a034"/>
<rect x="411" y="354" width="1" height="1" fill="#90a034"/>
<rect x="411" y="374" width="1" height="1" fill="#90a034"/>
<rect x="411" y="393" width="1" height="1" fill="#90a034"/>
<rect x="411" y="413" width="1" height="1" fill="#90a034"/>
<rect x="424" y="81" width="1" height="1" fill="#90a034"/>
<rect x="424" y="101" width="1" height="1" fill="#90a034"/>
<rect x="424" y="120" width="1" height="1" fill="#90a034"/>
<rect x="424" y="140" width="1" height="1" fill="#90a034"/>
<rect x="424" y="159" width="1" height="1" fill="#90a034"/>
<rect x="424" y="179" width="1" height="1" fill="#90a034"/>
<rect x="424" y="198" width="1" height="1" fill="#90a034"/>
<rect x="424" y="218" width="1" height="1" fill="#90a034"/>
<rect x="424" y="237" width="1" height="1" fill="#90a034"/>
<rect x="424" y="257" width="1" height="1" fill="#90a034"/>
<rect x="424" y="276" width="1" height="1" fill="#90a034"/>
<rect x="424" y="296" width="1" height="1" fill="#90a034"/>
<rect x="424" y="315" width="1" height="1" fill="#90a034"/>
<rect x="424" y="335" width="1" height="1" fill="#90a034"/>
<rect x="424" y="354" width="1" height="1" fill="#90a034"/>
<rect x="424" y="374" width="1" height="1" fill="#90a034"/>
<rect x="424" y="393" width="1" height="1" fill="#90a034"/>
<rect x="424" y="413" width="1" height="1" fill="#90a034"/>
<rect x="437" y="81" width="1" height="1" fill="#90a034"/>
<rect x="437" y="101" width="1" height="1" fill="#90a034"/>
<rect x="437" y="120" width="1" height="1" fill="#90a034"/>
<rect x="437" y="140" width="1" height="1" fill="#90a034"/>
<rect x="437" y="159" width="1" height="1" fill="#90a034"/>
<rect x="437" y="179" width="1" height="1" fill="#90a034"/>
<rect x="437" y="198" width="1" height="1" fill="#90a034"/>
<rect x="437" y="218" width="1" height="1" fill="#90a034"/>
<rect x="437" y="237" width="1" height="1" fill="#90a034"/>
<rect x="437" y="257" width="1" height="1" fill="#90a034"/>
<rect x="437" y="276" width="1" height="1" fill="#90a034"/>
<rect x="437" y="296" width="1" height="1" fill="#90a034"/>
<rect x="437" y="315" width="1" height="1" fill="#90a034"/>
<rect x="437" y="335" width="1" height="1" fill="#90a034"/>
<rect x="437" y="354" width="1" height="1" fill="#90a034"/>
<rect x="437" y="374" width="1" height="1" fill="#90a034"/>
<rect x="437" y="393" width="1" height="1" fill="#90a034"/>
<rect x="437" y="413" width="1" height="1" fill="#90a034"/>
<rect x="450" y="81" width="1" height="1" fill="#90a034"/>
<rect x="450" y="101" width="1" height="1" fill="#90a034"/>
<rect x="450" y="120" width="1" height="1" fill="#90a034"/>
<rect x="450" y="140" width="1" height="1" fill="#90a034"/>
<rect x="450" y="159" width="1" height="1" fill="#90a034"/>
<rect x="450" y="179" width="1" height="1" fill="#90a034"/>
<rect x="450" y="198" width="1" height="1" fill="#90a034"/>
<rect x="450" y="218" width="1" height="1" fill="#90a034"/>
<rect x="450" y="237" width="1" height="1" fill="#90a034"/>
<rect x="450" y="257" width="1" height="1" fill="#90a034"/>
<rect x="450" y="276" width="1" height="1" fill="#90a034"/>
<rect x="450" y="296" width="1" height="1" fill="#90a034"/>
<rect x="450" y="315" width="1" height="1" fill="#90a034"/>
<rect x="450" y="335" width="1" height="1" fill="#90a034"/>
<rect x="450" y="354" width="1" height="1" fill="#90a034"/>
<rect x="450" y="374" width="1" height="1" fill="#90a034"/>
<rect x="450" y="393" width="1" height="1" fill="#90a034"/>
<rect x="450" y="413" width="1" height="1" fill="#90a034"/>
<rect x="463" y="81" width="1" height="1" fill="#90a034"/>
<rect x="463" y="101" width="1" height="1" fill="#90a034"/>
<rect x="463" y="120" width="1" height="1" fill="#90a034"/>
<rect x="463" y="140" width="1" height="1" fill="#90a034"/>
<rect x="463" y="159" width="1" height="1" fill="#90a034"/>
<rect x="463" y="179" width="1" height="1" fill="#90a034"/>
<rect x="463" y="198" width="1" height="1" fill="#90a034"/>
<rect x="463" y="218" width="1" height="1" fill="#90a034"/>
<rect x="463" y="237" width="1" height="1" fill="#90a034"/>
<rect x="463" y="257" width="1" height="1" fill="#90a034"/>
<rect x="463" y="276" width="1" height="1" fill="#90a034"/>
<rect x="463" y="296" width="1" height="1" fill="#90a034"/>
<rect x="463" y="315" width="1" height="1" fill="#90a034"/>
<rect x="463" y="335" width="1" height="1" fill="#90a034"/>
<rect x="463" y="354" width="1" height="1" fill="#90a034"/>
<rect x="463" y="374" width="1" height="1" fill="#90a034"/>
<rect x="463" y="393" width="1" height="1" fill="#90a034"/>
<rect x="463" y="413" width="1" height="1" fill="#90a034"/>
<rect x="476" y="81" width="1" height="1" fill="#90a034"/>
<rect x="476" y="101" width="1" height="1" fill="#90a034"/>
<rect x="476" y="120" width="1" height="1" fill="#90a034"/>
<rect x="476" y="140" width="1" height="1" fill="#90a034"/>
<rect x="476" y="159" width="1" height="1" fill="#90a034"/>
<rect x="476" y="179" width="1" height="1" fill="#90a034"/>
<rect x="476" y="198" width="1" height="1" fill="#90a034"/>
<rect x="476" y="218" width="1" height="1" fill="#90a034"/>
<rect x="476" y="237" width="1" height="1" fill="#90a034"/>
<rect x="476" y="257" width="1" height="1" fill="#90a034"/>
<rect x="476" y="276" width="1" height="1" fill="#90a034"/>
<rect x="476" y="296" width="1" height="1" fill="#90a034"/>
<rect x="476" y="315" width="1" height="1" fill="#90a034"/>
<rect x="476" y="335" width="1" height="1" fill="#90a034"/>
<rect x="476" y="354" width="1" height="1" fill="#90a034"/>
<rect x="476" y="374" width="1" height="1" fill="#90a034"/>
<rect x="476" y="393" width="1" height="1" fill="#90a034"/>
<rect x="476" y="413" width="1" height="1" fill="#90a034"/>
<rect x="489" y="81" width="1" height="1" fill="#90a034"/>
<rect x="489" y="101" width="1" height="1" fill="#90a034"/>
<rect x="489" y="120" width="1" height="1" fill="#90a034"/>
<rect x="489" y="140" width="1" height="1" fill="#90a034"/>
<rect x="489" y="159" width="1" height="1" fill="#90a034"/>
<rect x="489" y="179" width="1" height="1" fill="#90a034"/>
<rect x="489" y="198" width="1" height="1" fill="#90a034"/>
<rect x="489" y="218" width="1" height="1" fill="#90a034"/>
<rect x="489" y="237" width="1" height="1" fill="#90a034"/>
<rect x="489" y="257" width="1" height="1" fill="#90a034"/>
<rect x="489" y="276" width="1" height="1" fill="#90a034"/>
<rect x="489" y="296" width="1" height="1" fill="#90a034"/>
<rect x="489" y="315" width="1" height="1" fill="#90a034"/>
<rect x="489" y="335" width="1" height="1" fill="#90a034"/>
<rect x="489" y="354" width="1" height="1" fill="#90a034"/>
<rect x="489" y="374" width="1" height="1" fill="#90a034"/>
<rect x="489" y="393" width="1" height="1" fill="#90a034"/>
<rect x="489" y="413" width="1" height="1" fill="#90a034"/>
<rect x="502" y="81" width="1" height="1" fill="#90a034"/>
<rect x="502" y="101" width="1" height="1" fill="#90a034"/>
<rect x="502" y="120" width="1" height="1" fill="#90a034"/>
<rect x="502" y="140" width="1" height="1" fill="#90a034"/>
<rect x="502" y="159" width="1" height="1" fill="#90a034"/>
<rect x="502" y="179" width="1" height="1" fill="#90a034"/>
<rect x="502" y="198" width="1" height="1" fill="#90a034"/>
<rect x="502" y="218" width="1" height="1" fill="#90a034"/>
<rect x="502" y="237" width="1" height="1" fill="#90a034"/>
<rect x="502" y="257" width="1" height="1" fill="#90a034"/>
<rect x="502" y="276" width="1" height="1" fill="#90a034"/>
<rect x="502" y="296" width="1" height="1" fill="#90a034"/>
<rect x="502" y="315" width="1" height="1" fill="#90a034"/>
<rect x="502" y="335" width="1" height="1" fill="#90a034"/>
<rect x="502" y="354" width="1" height="1" fill="#90a034"/>
<rect x="502" y="374" width="1" height="1" fill="#90a034"/>
<rect x="502" y="393" width="1" height="1" fill="#90a034"/>
<rect x="502" y="413" width="1" height="1" fill="#90a034"/>
<rect x="515" y="81" width="1" height="1" fill="#90a034"/>
<rect x="515" y="101" width="1" height="1" fill="#90a034"/>
<rect x="515" y="120" width="1" height="1" fill="#90a034"/>
<rect x="515" y="140" width="1" height="1" fill="#90a034"/>
<rect x="515" y="159" width="1" height="1" fill="#90a034"/>
<rect x="515" y="179" width="1" height="1" fill="#90a034"/>
<rect x="515" y="198" width="1" height="1" fill="#90a034"/>
<rect x="515" y="218" width="1" height="1" fill="#90a034"/>
<rect x="515" y="237" width="1" height="1" fill="#90a034"/>
<rect x="515" y="257" width="1" height="1" fill="#90a034"/>
<rect x="515" y="276" width="1" height="1" fill="#90a034"/>
<rect x="515" y="296" width="1" height="1" fill="#90a034"/>
<rect x="515" y="315" width="1" height="1" fill="#90a034"/>
<rect x="515" y="335" width="1" height="1" fill="#90a034"/>
<rect x="515" y="354" width="1" height="1" fill="#90a034"/>
<rect x="515" y="374" width="1" height="1" fill="#90a034"/>
<rect x="515" y="393" width="1" height="1" fill="#90a034"/>
<rect x="515" y="413" width="1" height="1" fill="#90a034"/>
<rect x="528" y="81" width="1" height="1" fill="#90a034"/>
<rect x="528" y="101" width="1" height="1" fill="#90a034"/>
<rect x="528" y="120" width="1" height="1" fill="#90a034"/>
<rect x="528" y="140" width="1" height="1" fill="#90a034"/>
<rect x="528" y="159" width="1" height="1" fill="#90a034"/>
<rect x="528" y="179" width="1" height="1" fill="#90a034"/>
<rect x="528" y="198" width="1" height="1" fill="#90a034"/>
<rect x="528" y="218" width="1" height="1" fill="#90a034"/>
<rect x="528" y="237" width="1" height="1" fill="#90a034"/>
<rect x="528" y="257" width="1" height="1" fill="#90a034"/>
<rect x="528" y="276" width="1" height="1" fill="#90a034"/>
<rect x="528" y="296" width="1" height="1" fill="#90a034"/>
<rect x="528" y="315" width="1" height="1" fill="#90a034"/>
<rect x="528" y="335" width="1" height="1" fill="#90a034"/>
<rect x="528" y="354" width="1" height="1" fill="#90a034"/>
<rect x="528" y="374" width="1" height="1" fill="#90a034"/>
<rect x="528" y="393" width="1" height="1" fill="#90a034"/>
<rect x="528" y="413" width="1" height="1" fill="#90a034"/>
<rect x="541" y="81" width="1" height="1" fill="#90a034"/>
<rect x="541" y="101" width="1" height="1" fill="#90a034"/>
<rect x="541" y="120" width="1" height="1" fill="#90a034"/>
<rect x="541" y="140" width="1" height="1" fill="#90a034"/>
<rect x="541" y="159" width="1" height="1" fill="#90a034"/>
<rect x="541" y="179" width="1" height="1" fill="#90a034"/>
<rect x="541" y="198" width="1" height="1" fill="#90a034"/>
<rect x="541" y="218" width="1" height="1" fill="#90a034"/>
<rect x="541" y="237" width="1" height="1" fill="#90a034"/>
<rect x="541" y="257" width="1" height="1" fill="#90a034"/>
<rect x="541" y="276" width="1" height="1" fill="#90a034"/>
<rect x="541" y="296" width="1" height="1" fill="#90a034"/>
<rect x="541" y="315" width="1" height="1" fill="#90a034"/>
<rect x="541" y="335" width="1" height="1" fill="#90a034"/>
<rect x="541" y="354" width="1" height="1" fill="#90a034"/>
<rect x="541" y="374" width="1" height="1" fill="#90a034"/>
<rect x="541" y="393" width="1" height="1" fill="#90a034"/>
<rect x="541" y="413" width="1" height="1" fill="#90a034"/>
<rect x="554" y="81" width="1" height="1" fill="#90a034"/>
<rect x="554" y="101" width="1" height="1" fill="#90a034"/>
<rect x="554" y="120" width="1" height="1" fill="#90a034"/>
<rect x="554" y="140" width="1" height="1" fill="#90a034"/>
<rect x="554" y="159" width="1" height="1" fill="#90a034"/>
<rect x="554" y="179" width="1" height="1" fill="#90a034"/>
<rect x="554" y="198" width="1" height="1" fill="#90a034"/>
<rect x="554" y="218" width="1" height="1" fill="#90a034"/>
<rect x="554" y="237" width="1" height="1" fill="#90a034"/>
<rect x="554" y="257" width="1" height="1" fill="#90a034"/>
<rect x="554" y="276" width="1" height="1" fill="#90a034"/>
<rect x="554" y="296" width="1" height="1" fill="#90a034"/>
<rect x="554" y="315" width="1" height="1" fill="#90a034"/>
<rect x="554" y="335" width="1" height="1" fill="#90a034"/>
<rect x="554" y="354" width="1" height="1" fill="#90a034"/>
<rect x="554" y="374" width="1" height="1" fill="#90a034"/>
<rect x="554" y="393" width="1" height="1" fill="#90a034"/>
<rect x="554" y="413" width="1" height="1" fill="#90a034"/>
<rect x="567" y="81" width="1" height="1" fill="#90a034"/>
<rect x="567" y="101" width="1" height="1" fill="#90a034"/>
<rect x="567" y="120" width="1" height="1" fill="#90a034"/>
<rect x="567" y="140" width="1" height="1" fill="#90a034"/>
<rect x="567" y="159" width="1" height="1" fill="#90a034"/>
<rect x="567" y="179" width="1" height="1" fill="#90a034"/>
<rect x="567" y="198" width="1" height="1" fill="#90a034"/>
<rect x="567" y="218" width="1" height="1" fill="#90a034"/>
<rect x="567" y="237" width="1" height="1" fill="#90a034"/>
<rect x="567" y="257" width="1" height="1" fill="#90a034"/>
<rect x="567" y="276" width="1" height="1" fill="#90a034"/>
<rect x="567" y="296" width="1" height="1" fill="#90a034"/>
<rect x="567" y="315" width="1" height="1" fill="#90a034"/>
<rect x="567" y="335" width="1" height="1" fill="#90a034"/>
<rect x="567" y="354" width="1" height="1" fill="#90a034"/>
<rect x="567" y="374" width="1" height="1" fill="#90a034"/>
<rect x="567" y="393" width="1" height="1" fill="#90a034"/>
<rect x="567" y="413" width="1" height="1" fill="#90a034"/>
<rect x="580" y="81" width="1" height="1" fill="#90a034"/>
<rect x="580" y="101" width="1" height="1" fill="#90a034"/>
<rect x="580" y="120" width="1" height="1" fill="#90a034"/>
<rect x="580" y="140" width="1" height="1" fill="#90a034"/>
<rect x="580" y="159" width="1" height="1" fill="#90a034"/>
<rect x="580" y="179" width="1" height="1" fill="#90a034"/>
<rect x="580" y="198" width="1" height="1" fill="#90a034"/>
<rect x="580" y="218" width="1" height="1" fill="#90a034"/>
<rect x="580" y="237" width="1" height="1" fill="#90a034"/>
<rect x="580" y="257" width="1" height="1" fill="#90a034"/>
<rect x="580" y="276" width="1" height="1" fill="#90a034"/>
<rect x="580" y="296" width="1" height="1" fill="#90a034"/>
<rect x="580" y="315" width="1" height="1" fill="#90a034"/>
<rect x="580" y="335" width="1" height="1" fill="#90a034"/>
<rect x="580" y="354" width="1" height="1" fill="#90a034"/>
<rect x="580" y="374" width="1" height="1" fill="#90a034"/>
<rect x="580" y="393" width="1" height="1" fill="#90a034"/>
<rect x="580" y="413" width="1" height="1" fill="#90a034"/>
<rect x="593" y="81" width="1" height="1" fill="#90a034"/>
<rect x="593" y="101" width="1" height="1" fill="#90a034"/>
<rect x="593" y="120" width="1" height="1" fill="#90a034"/>
<rect x="593" y="140" width="1" height="1" fill="#90a034"/>
<rect x="593" y="159" width="1" height="1" fill="#90a034"/>
<rect x="593" y="179" width="1" height="1" fill="#90a034"/>
<rect x="593" y="198" width="1" height="1" fill="#90a034"/>
<rect x="593" y="218" width="1" height="1" fill="#90a034"/>
<rect x="593" y="237" width="1" height="1" fill="#90a034"/>
<rect x="593" y="257" width="1" height="1" fill="#90a034"/>
<rect x="593" y="276" width="1" height="1" fill="#90a034"/>
<rect x="593" y="296" width="1" height="1" fill="#90a034"/>
<rect x="593" y="315" width="1" height="1" fill="#90a034"/>
<rect x="593" y="335" width="1" height="1" fill="#90a034"/>
<rect x="593" y="354" width="1" height="1" fill="#90a034"/>
<rect x="593" y="374" width="1" height="1" fill="#90a034"/>
<rect x="593" y="393" width="1" height="1" fill="#90a034"/>
<rect x="593" y="413" width="1" height="1" fill="#90a034"/>
<rect x="606" y="81" width="1" height="1" fill="#90a034"/>
<rect x="606" y="101" width="1" height="1" fill="#90a034"/>
<rect x="606" y="120" width="1" height="1" fill="#90a034"/>
<rect x="606" y="140" width="1" height="1" fill="#90a034"/>
<rect x="606" y="159" width="1" height="1" fill="#90a034"/>
<rect x="606" y="179" width="1" height="1" fill="#90a034"/>
<rect x="606" y="198" width="1" height="1" fill="#90a034"/>
<rect x="606" y="218" width="1" height="1" fill="#90a034"/>
<rect x="606" y="237" width="1" height="1" fill="#90a034"/>
<rect x="606" y="257" width="1" height="1" fill="#90a034"/>
<rect x="606" y="276" width="1" height="1" fill="#90a034"/>
<rect x="606" y="296" width="1" height="1" fill="#90a034"/>
<rect x="606" y="315" width="1" height="1" fill="#90a034"/>
<rect x="606" y="335" width="1" height="1" fill="#90a034"/>
<rect x="606" y="354" width="1" height="1" fill="#90a034"/>
<rect x="606" y="374" width="1" height="1" fill="#90a034"/>
<rect x="606" y="393" width="1" height="1" fill="#90a034"/>
<rect x="606" y="413" width="1" height="1" fill="#90a034"/>
<rect x="459.5" y="83.5" width="150" height="49" fill="#000052" stroke="#6e6e40" stroke-width="1"/>
<rect x="489" y="100" width="10" height="2" fill="#ff00ff"/>
<rect x="489" y="116" width="10" height="2" fill="#ffff00"/>
<text x="510.5" y="104" style="fill:#fff;stroke:none;font-size:10.5px">Left Channel</text>
<text x="510.5" y="120" style="fill:#fff;stroke:none;font-size:10.5px">Right Channel</text>
<polyline points="49.8,142.3 50.3,149.2 51.7,161.3 53.3,168.3 55.0,175.2 56.7,180.4 58.1,176.9 59.5,171.7 60.7,175.2 61.9,166.5 63.3,176.9 64.7,183.8 65.9,189.0 67.6,193.3 69.4,187.3 71.4,175.2 72.5,185.6 73.3,176.9 74.5,184.7 75.8,191.6 77.1,201.1 78.9,195.9 80.1,190.7 81.5,200.3 82.9,195.1 84.1,198.5 85.8,203.7 87.5,206.3 88.9,194.2 90.1,203.7 92.7,207.2 94.4,194.2 95.8,201.1 97.9,205.4 99.3,203.7 100.3,194.2 101.4,202.0 103.1,196.8 103.8,197.1 105.8,208.4 107.6,210.9 109.6,198.4 111.8,214.7 113.8,210.9 115.6,203.4 117.6,171.2 119.4,203.4 120.6,221.0 122.6,229.8 124.4,227.2 125.9,217.2 127.7,228.5 128.9,233.5 130.0,217.2 130.9,225.9 132.1,232.8 133.1,238.0 134.3,226.7 135.2,224.1 136.6,238.0 137.8,229.3 138.7,213.8 140.4,203.4 141.2,212.9 141.8,227.6 143.0,234.5 144.2,231.9 145.6,239.7 147.3,248.4 148.7,245.8 149.9,243.2 151.1,227.6 152.1,218.6 152.8,230.2 153.9,243.2 155.1,246.6 156.3,242.3 157.7,230.2 158.5,238.8 159.8,247.5 161.1,244.9 162.5,239.7 163.7,235.4 164.6,238.0 166.0,248.4 167.2,250.1 168.4,243.2 169.8,229.3 170.7,235.4 171.5,230.2 172.4,239.7 173.6,246.6 175.0,251.8 176.7,253.6 178.4,251.8 179.8,257.0 181.0,262.2 182.4,263.9 183.6,253.6 185.0,243.2 186.2,221.5 187.1,227.6 188.0,236.3 189.2,246.6 190.6,255.3 191.9,252.7 193.1,259.6 194.4,262.2 195.7,252.7 197.1,260.5 198.3,255.3 199.6,250.1 200.9,257.0 202.3,248.4 203.5,243.2 204.4,239.4 205.3,244.9 206.5,253.6 207.9,259.6 209.2,253.6 210.4,248.4 211.3,251.8 212.7,246.3 213.9,253.6 215.1,262.2 216.5,264.8 217.9,263.1 219.1,265.7 220.3,260.5 221.3,256.1 222.6,262.2 223.8,269.1 225.2,270.9 226.9,267.4 228.6,263.9 230.0,262.2 232.7,254.5 235.2,263.3 237.7,270.8 240.2,267.1 242.7,274.6 245.2,278.4 247.7,283.4 250.3,278.4 252.8,277.1 255.8,261.3 258.3,275.9 260.3,288.4 262.3,292.2 264.8,278.4 267.3,272.8 269.8,283.4 271.6,290.9 274.1,285.9 276.6,284.7 279.1,285.9 280.9,283.4 282.9,277.1 284.7,296.0 286.2,304.8 288.4,302.2 289.9,289.7 291.0,282.9 293.0,292.2 295.0,290.9 297.5,279.6 299.2,289.7 302,295.1 303,294.8 304,293.6 305,286.5 306,293.7 307,299.3 308,296.0 309,293.8 310,288.3 311,288.2 312,292.1 313,299.2 314,303.4 315,309.8 316,311.6 317,307.6 318,310.3 319,307.3 320,303.0 321,299.8 322,294.8 323,291.2 324,290.0 325,284.4 326,284.4 327,288.7 328,291.7 329,297.8 330,301.9 331,308.3 332,310.9 333,309.1 334,299.3 335,298.4 336,301.9 337,301.5 338,304.0 339,306.4 340,308.9 341,307.3 342,303.5 343,306.1 344,307.4 345,303.3 346,303.9 347,301.3 348,302.2 349,302.9 350,308.9 351,311.6 352,310.9 353,309.7 354,311.5 355,309.4 356,312.4 357,305.8 358,301.9 359,308.4 360,311.9 361,311.2 362,311.9 363,312.2 364,311.8 365,311.3 366,312.5 367,317.1 368,318.6 369,319.5 370,319.7 371,314.0 372,310.6 373,308.0 374,310.6 375,317.4 376,312.9 377,312.7 378,313.4 379,318.0 380,318.5 381,320.2 382,324.5 383,324.7 384,323.9 385,330.9 386,327.3 387,319.7 388,323.1 389,324.7 390,322.7 391,323.7 392,317.4 393,315.8 394,317.2 395,320.1 396,324.0 397,324.9 398,326.6 399,329.8 400,329.3 401,333.1 402,334.6 403,336.2 404,336.9 405,333.3 406,332.2 407,332.0 408,328.6 409,330.4 410,335.6 411,334.0 412,329.0 413,326.9 414,330.4 415,332.2 416,329.6 417,333.5 418,333.9 419,334.1 420,334.8 421,334.6 422,335.3 423,340.7 424,340.0 425,343.5 426,338.8 427,340.4 428,341.4 429,342.1 430,340.9 431,342.3 432,339.4 433,341.6 434,344.5 435,345.1 436,343.0 437,340.5 438,342.3 439,338.2 440,338.6 441,341.2 442,343.3 443,342.6 444,344.1 445,346.3 446,348.8 447,348.0 448,349.5 449,352.3 450,353.6 451,353.2 452,354.2 453,354.2 454,352.8 455,350.9 456,348.8 457,352.1 458,354.0 459,355.6 460,349.5 461,349.8 462,346.1 463,344.2 464,346.2 465,352.9 466,351.6 467,355.3 468,353.2 469,354.0 470,356.0 471,357.9 472,358.7 473,359.6 474,356.9 475,356.9 476,357.6 477,359.0 478,359.1 479,359.5 480,358.8 481,357.6 482,358.8 483,359.0 484,358.4 485,357.0 486,354.2 487,355.5 488,356.1 489,357.4 490,358.9 491,359.4 492,361.6 493,362.1 494,362.6 495,364.9 496,362.9 497,364.0 498,360.7 499,363.1 500,363.7 501,363.9 502,366.4 503,366.8 504,366.6 505,366.5 506,364.0 507,364.2 508,366.2 509,367.2 510,365.2 511,364.6 512,366.5 513,365.2 514,364.7 515,366.6 516,365.3 517,366.9 518,365.9 519,367.5 520,370.9 521,372.3 522,372.8 523,371.9 524,372.7 525,371.8 526,371.2 527,372.0 528,372.4 529,371.8 530,370.6 531,370.9 532,370.0 533,370.8 534,372.2 535,372.2 536,372.5 537,373.6 538,374.8 539,374.9 540,375.0 541,376.4 542,377.0 543,376.3 544,376.2 545,379.1 546,380.9 547,378.9 548,379.9 549,379.4 550,378.7 551,380.0 552,379.2 553,380.3 554,381.6 555,381.5 556,383.2 557,381.6 558,380.9 559,380.5 560,381.4 561,381.4 562,382.8 563,383.9 564,383.9 565,383.9 566,382.9 567,381.3 568,382.2 569,383.0 570,384.1 571,386.4 572,389.3 573,391.3 574,393.4 575,395.4 576,397.1 577,398.3 578,399.5 579,400.1 580,400.7 581,401.3 582,401.7 583,402.2 584,401.4 585,401.8 586,402.0 587,402.1 588,402.1 589,402.1 590,402.2 591,402.2 592,402.3 593,402.3 594,402.4 595,402.5 596,402.5 597,402.5 598,402.5 599,402.5 600,402.5 601,402.5 602,402.5 603,402.5 604,402.6 605,402.6 606,402.6 607,402.6 608,402.6 609,402.7 610,402.7 611,402.7 612,402.7 613,402.7 614,402.7 615,402.7 616,402.7 617,402.7 618,402.7 618.8,402.7" fill="none" stroke="#ff00ff" stroke-width="1" shape-rendering="crispEdges"/>
<polyline points="49.1,131.9 50.3,142.3 51.7,151.0 53.3,156.1 55.0,160.5 56.7,164.8 58.1,160.5 59.0,156.1 59.8,161.3 61.2,148.4 62.4,159.6 63.3,168.3 64.2,171.7 65.4,163.1 66.4,173.4 67.6,182.1 68.8,185.6 70.2,170.0 71.4,153.5 72.3,176.9 73.3,166.5 74.5,182.1 75.8,189.0 77.1,198.5 78.9,192.5 80.1,187.3 81.5,197.7 82.9,183.8 84.1,195.9 85.8,201.1 87.5,203.7 88.9,189.0 90.1,201.1 92.7,204.6 94.4,174.3 95.8,197.7 97.9,202.9 99.3,201.1 100.3,173.4 101.4,199.4 103.1,194.2 103.8,194.1 105.8,205.4 107.6,207.9 109.6,195.4 111.8,211.7 113.8,207.9 115.6,200.4 117.6,168.2 119.4,200.4 120.6,218.0 122.6,226.8 124.4,224.2 125.9,214.2 127.7,225.5 128.9,230.5 130.0,214.2 130.9,222.9 132.1,229.8 133.1,235.0 134.3,223.7 135.2,221.1 136.6,235.0 137.8,226.3 138.7,210.8 140.4,200.4 141.2,209.9 141.8,224.6 143.0,231.5 144.2,228.9 145.6,236.7 147.3,245.4 148.7,242.8 149.9,240.2 151.1,224.6 152.1,215.6 152.8,227.2 153.9,240.2 155.1,243.6 156.3,239.3 157.7,227.2 158.5,235.8 159.8,244.5 161.1,241.9 162.5,236.7 163.7,232.4 164.6,235.0 166.0,245.4 167.2,247.1 168.4,240.2 169.8,226.3 170.7,232.4 171.5,227.2 172.4,236.7 173.6,243.6 175.0,248.8 176.7,250.6 178.4,248.8 179.8,254.0 181.0,259.2 182.4,260.9 183.6,250.6 185.0,240.2 186.2,218.5 187.1,224.6 188.0,233.3 189.2,243.6 190.6,252.3 191.9,249.7 193.1,256.6 194.4,259.2 195.7,249.7 197.1,257.5 198.3,252.3 199.6,247.1 200.9,254.0 202.3,245.4 203.5,240.2 204.4,236.4 205.3,241.9 206.5,250.6 207.9,256.6 209.2,250.6 210.4,245.4 211.3,248.8 212.7,243.3 213.9,250.6 215.1,259.2 216.5,261.8 217.9,260.1 219.1,262.7 220.3,257.5 221.3,253.1 222.6,259.2 223.8,266.1 225.2,267.9 226.9,264.4 228.6,260.9 230.0,259.2 232.7,251.5 235.2,260.3 237.7,267.8 240.2,264.1 242.7,271.6 245.2,275.4 247.7,280.4 250.3,275.4 252.8,274.1 255.8,258.3 258.3,272.9 260.3,285.4 262.3,289.2 264.8,275.4 267.3,269.8 269.8,280.4 271.6,287.9 274.1,282.9 276.6,281.7 279.1,282.9 280.9,280.4 282.9,274.1 284.7,293.0 286.2,301.8 288.4,299.2 289.9,286.7 291.0,279.9 293.0,289.2 295.0,287.9 297.5,276.6 299.2,286.7 302,292.1 303,290.5 304,289.9 305,282.3 306,291.3 307,295.8 308,293.0 309,291.3 310,283.2 311,284.2 312,289.5 313,295.8 314,302.4 315,307.4 316,306.6 317,305.9 318,306.2 319,304.8 320,300.1 321,296.3 322,295.9 323,288.8 324,288.9 325,282.9 326,281.7 327,285.6 328,290.5 329,296.9 330,298.3 331,304.6 332,308.9 333,305.4 334,297.0 335,293.2 336,297.7 337,298.7 338,300.1 339,301.4 340,304.1 341,304.2 342,301.6 343,303.9 344,307.2 345,303.6 346,299.1 347,299.5 348,298.3 349,302.5 350,305.4 351,306.7 352,312.7 353,306.8 354,306.8 355,310.2 356,308.3 357,305.7 358,301.3 359,308.0 360,311.4 361,312.0 362,314.9 363,311.6 364,310.1 365,310.1 366,314.1 367,317.5 368,321.3 369,322.9 370,317.8 371,315.6 372,310.6 373,311.3 374,314.8 375,320.7 376,318.2 377,313.3 378,316.8 379,321.3 380,319.9 381,323.3 382,323.1 383,323.9 384,325.0 385,332.6 386,329.1 387,321.2 388,323.3 389,327.9 390,324.8 391,323.5 392,321.1 393,320.8 394,319.6 395,324.7 396,326.1 397,328.6 398,330.0 399,333.3 400,334.6 401,333.3 402,335.9 403,337.5 404,336.0 405,335.5 406,334.5 407,331.6 408,330.0 409,333.7 410,335.4 411,335.1 412,334.3 413,331.3 414,331.6 415,333.0 416,333.9 417,331.7 418,336.2 419,337.1 420,339.0 421,339.8 422,339.1 423,340.5 424,341.7 425,345.4 426,340.1 427,339.3 428,341.9 429,343.7 430,343.8 431,341.5 432,341.3 433,343.4 434,344.7 435,345.1 436,342.6 437,345.3 438,343.2 439,340.2 440,341.8 441,343.7 442,345.1 443,345.0 444,349.2 445,351.3 446,350.5 447,351.8 448,350.5 449,351.1 450,353.0 451,353.7 452,357.0 453,354.6 454,354.5 455,357.1 456,353.2 457,351.0 458,355.5 459,353.7 460,354.0 461,353.5 462,350.0 463,346.3 464,348.1 465,352.3 466,354.2 467,358.5 468,354.5 469,355.6 470,356.9 471,358.5 472,360.9 473,362.0 474,360.7 475,359.5 476,359.5 477,360.8 478,360.7 479,360.9 480,359.3 481,358.1 482,359.1 483,360.9 484,359.6 485,359.4 486,359.2 487,357.1 488,358.1 489,360.0 490,361.8 491,361.6 492,362.1 493,363.1 494,364.0 495,365.1 496,366.8 497,366.7 498,365.5 499,364.9 500,366.5 501,368.0 502,366.7 503,369.5 504,369.7 505,368.3 506,367.8 507,367.9 508,368.0 509,369.8 510,367.8 511,368.9 512,368.9 513,366.5 514,366.7 515,369.0 516,368.8 517,367.5 518,367.9 519,368.8 520,372.3 521,372.9 522,371.5 523,374.3 524,375.0 525,373.9 526,372.9 527,373.2 528,371.2 529,370.1 530,372.5 531,370.9 532,371.8 533,374.2 534,373.2 535,375.1 536,375.4 537,373.9 538,374.6 539,375.2 540,375.9 541,376.9 542,376.6 543,377.2 544,377.4 545,379.6 546,378.6 547,378.5 548,378.4 549,378.9 550,377.7 551,379.0 552,379.0 553,379.9 554,380.6 555,380.3 556,381.2 557,380.2 558,379.4 559,380.8 560,379.3 561,380.3 562,381.8 563,382.5 564,381.7 565,381.8 566,381.4 567,381.3 568,380.3 569,382.6 570,383.4 571,384.8 572,388.2 573,390.1 574,392.2 575,394.2 576,395.9 577,397.1 578,398.3 579,398.9 580,399.5 581,400.1 582,400.5 583,401.0 584,401.4 585,401.8 586,402.0 587,402.1 588,402.1 589,402.1 590,402.2 591,402.2 592,402.3 593,402.3 594,402.4 595,402.5 596,402.5 597,402.5 598,402.5 599,402.5 600,402.5 601,402.5 602,402.5 603,402.5 604,402.6 605,402.6 606,402.6 607,402.6 608,402.6 609,402.7 610,402.7 611,402.7 612,402.7 613,402.7 614,402.7 615,402.7 616,402.7 617,402.7 618,402.7 618.8,402.7" fill="none" stroke="#ffff00" stroke-width="1" shape-rendering="crispEdges"/>
<rect x="48" y="132" width="1" height="301" fill="#ffff00"/>
<rect x="48" y="283" width="1" height="5" fill="#ff00ff"/>
<rect x="592" y="402" width="1.4" height="1" fill="#ff00ff"/>
<rect x="594" y="402" width="1.4" height="1" fill="#ff00ff"/>
<rect x="596" y="402" width="1.4" height="1" fill="#ff00ff"/>
<rect x="598" y="402" width="1.4" height="1" fill="#ff00ff"/>

<rect x="48" y="433" width="1" height="7" fill="#444"/>
<rect x="60" y="433" width="1" height="4" fill="#444"/>
<rect x="73" y="433" width="1" height="7" fill="#444"/>
<rect x="86" y="433" width="1" height="4" fill="#444"/>
<rect x="99" y="433" width="1" height="7" fill="#444"/>
<rect x="112" y="433" width="1" height="4" fill="#444"/>
<rect x="125" y="433" width="1" height="7" fill="#444"/>
<rect x="138" y="433" width="1" height="4" fill="#444"/>
<rect x="151" y="433" width="1" height="7" fill="#444"/>
<rect x="164" y="433" width="1" height="4" fill="#444"/>
<rect x="177" y="433" width="1" height="7" fill="#444"/>
<rect x="190" y="433" width="1" height="4" fill="#444"/>
<rect x="203" y="433" width="1" height="7" fill="#444"/>
<rect x="216" y="433" width="1" height="4" fill="#444"/>
<rect x="229" y="433" width="1" height="7" fill="#444"/>
<rect x="242" y="433" width="1" height="4" fill="#444"/>
<rect x="255" y="433" width="1" height="7" fill="#444"/>
<rect x="268" y="433" width="1" height="4" fill="#444"/>
<rect x="281" y="433" width="1" height="7" fill="#444"/>
<rect x="294" y="433" width="1" height="4" fill="#444"/>
<rect x="307" y="433" width="1" height="7" fill="#444"/>
<rect x="320" y="433" width="1" height="4" fill="#444"/>
<rect x="333" y="433" width="1" height="7" fill="#444"/>
<rect x="346" y="433" width="1" height="4" fill="#444"/>
<rect x="359" y="433" width="1" height="7" fill="#444"/>
<rect x="372" y="433" width="1" height="4" fill="#444"/>
<rect x="385" y="433" width="1" height="7" fill="#444"/>
<rect x="398" y="433" width="1" height="4" fill="#444"/>
<rect x="411" y="433" width="1" height="7" fill="#444"/>
<rect x="424" y="433" width="1" height="4" fill="#444"/>
<rect x="437" y="433" width="1" height="7" fill="#444"/>
<rect x="450" y="433" width="1" height="4" fill="#444"/>
<rect x="463" y="433" width="1" height="7" fill="#444"/>
<rect x="476" y="433" width="1" height="4" fill="#444"/>
<rect x="489" y="433" width="1" height="7" fill="#444"/>
<rect x="502" y="433" width="1" height="4" fill="#444"/>
<rect x="515" y="433" width="1" height="7" fill="#444"/>
<rect x="528" y="433" width="1" height="4" fill="#444"/>
<rect x="541" y="433" width="1" height="7" fill="#444"/>
<rect x="554" y="433" width="1" height="4" fill="#444"/>
<rect x="567" y="433" width="1" height="7" fill="#444"/>
<rect x="580" y="433" width="1" height="4" fill="#444"/>
<rect x="593" y="433" width="1" height="7" fill="#444"/>
<rect x="606" y="433" width="1" height="4" fill="#444"/>
<rect x="620" y="81" width="6" height="1" fill="#444"/>
<rect x="620" y="101" width="3" height="1" fill="#444"/>
<rect x="620" y="120" width="6" height="1" fill="#444"/>
<rect x="620" y="140" width="3" height="1" fill="#444"/>
<rect x="620" y="159" width="6" height="1" fill="#444"/>
<rect x="620" y="179" width="3" height="1" fill="#444"/>
<rect x="620" y="198" width="6" height="1" fill="#444"/>
<rect x="620" y="218" width="3" height="1" fill="#444"/>
<rect x="620" y="237" width="6" height="1" fill="#444"/>
<rect x="620" y="257" width="3" height="1" fill="#444"/>
<rect x="620" y="276" width="6" height="1" fill="#444"/>
<rect x="620" y="296" width="3" height="1" fill="#444"/>
<rect x="620" y="315" width="6" height="1" fill="#444"/>
<rect x="620" y="335" width="3" height="1" fill="#444"/>
<rect x="620" y="354" width="6" height="1" fill="#444"/>
<rect x="620" y="374" width="3" height="1" fill="#444"/>
<rect x="620" y="393" width="6" height="1" fill="#444"/>
<rect x="620" y="413" width="3" height="1" fill="#444"/>
<text x="73.3" y="450" text-anchor="middle">1</text>
<text x="99.3" y="450" text-anchor="middle">2</text>
<text x="125.3" y="450" text-anchor="middle">3</text>
<text x="151.3" y="450" text-anchor="middle">4</text>
<text x="177.3" y="450" text-anchor="middle">5</text>
<text x="203.3" y="450" text-anchor="middle">6</text>
<text x="229.3" y="450" text-anchor="middle">7</text>
<text x="255.3" y="450" text-anchor="middle">8</text>
<text x="281.3" y="450" text-anchor="middle">9</text>
<text x="307.0" y="450" text-anchor="middle">10</text>
<text x="333.0" y="450" text-anchor="middle">11</text>
<text x="359.0" y="450" text-anchor="middle">12</text>
<text x="385.0" y="450" text-anchor="middle">13</text>
<text x="411.0" y="450" text-anchor="middle">14</text>
<text x="437.0" y="450" text-anchor="middle">15</text>
<text x="463.0" y="450" text-anchor="middle">16</text>
<text x="489.0" y="450" text-anchor="middle">17</text>
<text x="515.0" y="450" text-anchor="middle">18</text>
<text x="541.0" y="450" text-anchor="middle">19</text>
<text x="567.0" y="450" text-anchor="middle">20</text>
<text x="593.0" y="450" text-anchor="middle">21</text>
<text x="620.5" y="450">kHz</text>
<text x="629" y="84.3">- 00</text>
<text x="629" y="123.3">- 10</text>
<text x="629" y="162.3">- 20</text>
<text x="629" y="201.3">- 30</text>
<text x="629" y="240.3">- 40</text>
<text x="629" y="279.3">- 50</text>
<text x="629" y="318.3">- 60</text>
<text x="629" y="357.3">- 70</text>
<text x="629" y="396.3">- 80</text>
<text x="635" y="69">dB</text>
</svg>
</div>
</body></html>
